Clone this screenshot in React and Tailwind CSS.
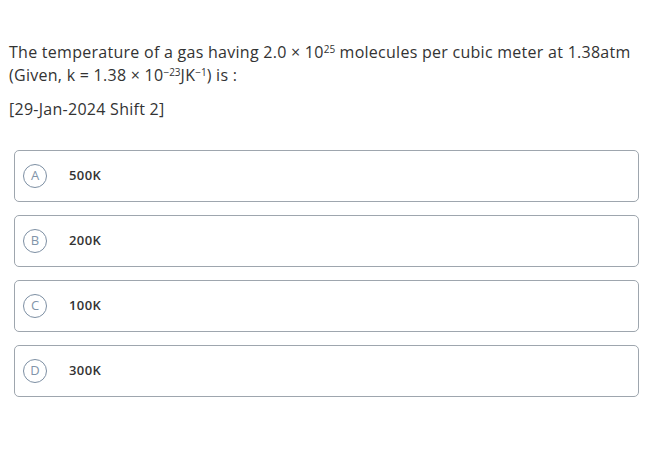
export default function App() {
  const opts = [
    ["A", "500K"],
    ["B", "200K"],
    ["C", "100K"],
    ["D", "300K"],
  ];
  return (
    <div className="w-[650px] h-[450px] bg-white text-[#333333]" style={{ fontFamily: '"Open Sans", sans-serif' }}>
      <div className="pl-[9px] pr-[4px] pt-[41px] tracking-[0.27px]">
        <p className="text-[16px] leading-[23px]">
          The temperature of a gas having 2.0 × 10<sup className="text-[10px] tracking-normal">25</sup> molecules per cubic meter at 1.38atm
          <br />
          (Given, k = 1.38 × 10<sup className="text-[10px] tracking-normal">−23</sup>JK<sup className="text-[10px] tracking-normal">−1</sup>) is :
        </p>
        <p className="text-[16px] leading-[23px] mt-[11px]">[29-Jan-2024 Shift 2]</p>
      </div>
      <div className="flex flex-col gap-[13px] pl-[14px] pr-[11px] mt-[29px]">
        {opts.map(([l, t]) => (
          <div key={l} className="h-[52px] border border-[#9ea6ae] rounded-[5px] flex items-center pl-[8px]">
            <div className="w-[24px] h-[24px] rounded-full border border-[#7d8fa3] flex items-center justify-center text-[13px] text-[#8194a9]">
              {l}
            </div>
            <div className="ml-[22px] text-[13px] font-semibold tracking-[0.4px] text-[#333333]">{t}</div>
          </div>
        ))}
      </div>
    </div>
  );
}
